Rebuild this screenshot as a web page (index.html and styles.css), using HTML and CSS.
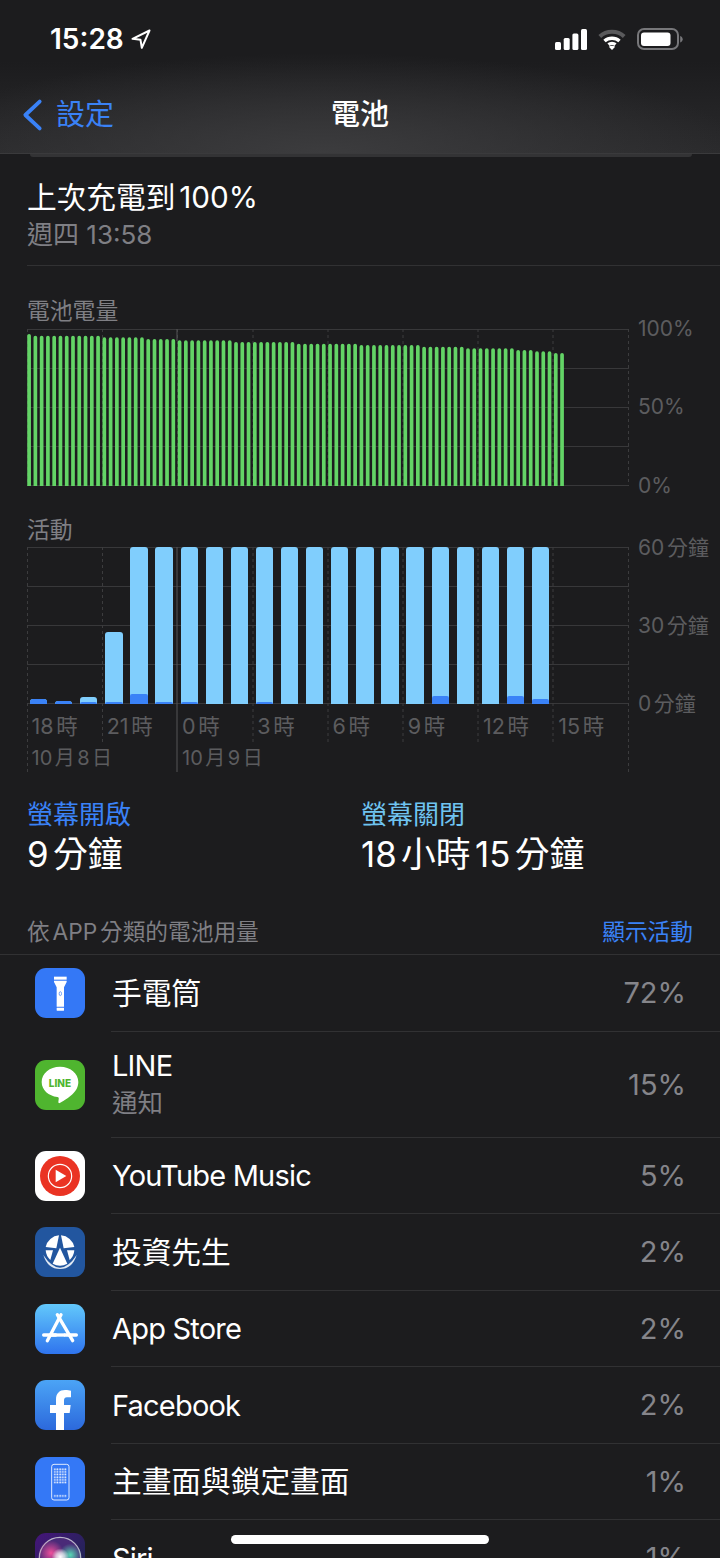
FILE: index.html
```html
<!DOCTYPE html>
<html lang="zh-Hant">
<head>
<meta charset="utf-8">
<title>電池</title>
<link rel="stylesheet" href="styles.css">
</head>
<body>
<div class="screen">
  <header class="top">
    <div class="status">
      <div class="clock"><span>15:28</span>
        <svg class="loc" viewBox="0 0 20 20"><path d="M18.5 1.5 1.500 9.800 9.500 10.800 10.800 18.800Z"/></svg>
      </div>
      <div class="sys">
        <svg class="signal" viewBox="0 0 32 21"><rect x="0" y="13" width="6" height="8" rx="1.500"/><rect x="8.700" y="9" width="6" height="12" rx="1.500"/><rect x="17.400" y="4.500" width="6" height="16.500" rx="1.500"/><rect x="26" y="0" width="6" height="21" rx="1.500"/></svg>
        <svg class="wifi" viewBox="0 0 28 21"><path class="wifi-dim" d="M1.800 7.500C8.500 1.200 19.500 1.200 26.200 7.500"/><path class="wifi-on" d="M6.500 12C10.800 8.300 17.200 8.300 21.500 12"/><path class="wifi-on" d="M10.500 15.600C12.500 14 15.500 14 17.500 15.600"/><path class="wifi-tip" d="M14 21 10.800 17.700C12.700 16.400 15.300 16.400 17.200 17.700Z"/></svg>
        <svg class="batt" viewBox="0 0 46 22"><rect class="batt-shell" x="1" y="1" width="40" height="20" rx="6"/><rect class="batt-fill" x="4" y="4.500" width="29.500" height="13.500" rx="3"/><path class="batt-cap" d="M43.200 8v6.500c1.500-.5 2.500-1.700 2.500-3.200s-1-2.800-2.500-3.300Z"/></svg>
      </div>
    </div>
    <nav class="nav">
      <a class="back">
        <svg class="chev" viewBox="0 0 22 34"><path d="M18.500 3 3.500 17l15 14"/></svg>
        <span>設定</span>
      </a>
      <h1 class="title">電池</h1>
    </nav>
  </header>
  <div class="peek"></div>

  <section class="charged">
    <div class="charged-main">上次充電到100%</div>
    <div class="charged-sub">週四 13:58</div>
  </section>

  <section class="chart-block battery">
    <h2 class="chart-title">電池電量</h2>
    <div class="chart-row">
      <div class="plot">
        <svg class="grid" viewBox="0 0 602 157"><path class="h" d="M0 .5H602M0 39.500H602M0 78.500H602M0 117.500H602M0 156.500H602"/><path class="v" d="M.5 0V157M75.500 0V157M150.500 0V157M226 0V157M301 0V157M376 0V157M451 0V157M526 0V157M601.500 0V157"/><path class="day" d="M150 0V12"/></svg>
        <svg class="levels" viewBox="0 0 602 157"><path transform="translate(0 2)" d="M2.100 4.800V160M8.370 6.500V160m6.270-153.500V160m6.270-153.500V160m6.270-153.500V160m6.270-153.500V160m6.270-153.500V160m6.270-153.500V160m6.270-153.500V160m6.270-153.500V160m6.270-153.500V160m6.270-153.500V160M77.340 8.200V160m6.270-151.800V160m6.270-151.800V160m6.270-151.800V160m6.270-151.800V160m6.270-151.800V160m6.270-151.800V160M121.230 9.800V160m6.270-150.200V160m6.270-150.200V160m6.270-150.200V160m6.270-150.200V160M152.580 11.200V160m6.270-148.800V160m6.270-148.800V160m6.270-148.800V160m6.270-148.800V160m6.270-148.800V160m6.270-148.800V160m6.270-148.800V160m6.270-148.800V160M209.010 12.800V160m6.270-147.200V160m6.270-147.200V160m6.270-147.200V160m6.270-147.200V160m6.270-147.200V160m6.270-147.200V160m6.270-147.200V160m6.270-147.200V160m6.270-147.200V160M271.710 14.500V160m6.270-145.500V160m6.270-145.500V160m6.270-145.500V160m6.270-145.500V160m6.270-145.500V160m6.270-145.500V160m6.270-145.500V160m6.270-145.500V160m6.270-145.500V160M334.410 15.900V160m6.270-144.100V160m6.270-144.100V160m6.270-144.100V160m6.270-144.100V160m6.270-144.100V160m6.270-144.100V160m6.270-144.100V160m6.270-144.100V160m6.270-144.100V160M397.110 17.500V160m6.270-142.500V160m6.270-142.500V160m6.270-142.500V160m6.270-142.500V160m6.270-142.500V160m6.270-142.500V160M440.990 19V160m6.270-141V160m6.270-141V160m6.270-141V160m6.270-141V160m6.270-141V160m6.270-141V160m6.270-141V160M491.160 20.800V160m6.270-139.200V160m6.270-139.200V160M510 22.200V160m6.270-137.800V160m6.270-137.800V160M528.780 23.800V160m6.270-136.200V160"/></svg>
      </div>
      <div class="axis">
        <span>100%</span><span>50%</span><span>0%</span>
      </div>
    </div>
  </section>

  <section class="chart-block activity">
    <h2 class="chart-title">活動</h2>
    <div class="chart-row">
      <div class="plot">
        <svg class="grid tall" viewBox="0 0 602 225"><path class="h" d="M0 .5H602M0 39.500H602M0 78.500H602M0 117.500H602M0 156.500H602"/><path class="v" d="M75.500 0V196M226 0V196M301 0V196M376 0V196M451 0V196M526 0V196M.5 0V225M601.500 0V225"/><path class="day" d="M150 0V225"/></svg>
        <div class="bars">
          <div class="bar" style="height:5px"><i style="height:5px"></i></div>
          <div class="bar" style="height:3px"><i style="height:3px"></i></div>
          <div class="bar" style="height:7px"><i style="height:2px"></i></div>
          <div class="bar" style="height:72px"><i style="height:2px"></i></div>
          <div class="bar" style="height:157px"><i style="height:10px"></i></div>
          <div class="bar" style="height:157px"><i style="height:2px"></i></div>
          <div class="bar" style="height:157px"><i style="height:2px"></i></div>
          <div class="bar" style="height:157px"></div>
          <div class="bar" style="height:157px"></div>
          <div class="bar" style="height:157px"><i style="height:2px"></i></div>
          <div class="bar" style="height:157px"></div>
          <div class="bar" style="height:157px"></div>
          <div class="bar" style="height:157px"></div>
          <div class="bar" style="height:157px"></div>
          <div class="bar" style="height:157px"></div>
          <div class="bar" style="height:157px"></div>
          <div class="bar" style="height:157px"><i style="height:8px"></i></div>
          <div class="bar" style="height:157px"></div>
          <div class="bar" style="height:157px"></div>
          <div class="bar" style="height:157px"><i style="height:8px"></i></div>
          <div class="bar" style="height:157px"><i style="height:5px"></i></div>
        </div>
        <div class="hours">
          <span>18時</span><span>21時</span><span>0時</span><span>3時</span><span>6時</span><span>9時</span><span>12時</span><span>15時</span>
        </div>
        <div class="dates">
          <span class="d1">10月8日</span><span class="d2">10月9日</span>
        </div>
      </div>
      <div class="axis axis-time">
        <span>60分鐘</span><span>30分鐘</span><span>0分鐘</span>
      </div>
    </div>
  </section>

  <section class="summary">
    <div class="stat">
      <div class="stat-label on">螢幕開啟</div>
      <div class="stat-value">9分鐘</div>
    </div>
    <div class="stat">
      <div class="stat-label off">螢幕關閉</div>
      <div class="stat-value">18小時15分鐘</div>
    </div>
  </section>

  <div class="list-head">
    <span>依APP分類的電池用量</span>
    <a class="link">顯示活動</a>
  </div>

  <ul class="apps">
    <li class="app">
      <svg class="icon" viewBox="0 0 150 150"><rect width="150" height="150" rx="33" fill="#3478f6"/><g fill="#fff"><rect x="57" y="26" width="38" height="9"/><path d="M57 38H95V42L87 58V116H65V58L57 42Z"/><rect x="65" y="119" width="22" height="9" rx="1"/></g><ellipse cx="76" cy="77" rx="3.500" ry="6" fill="none" stroke="#3478f6" stroke-width="2"/></svg>
      <div class="app-body"><div class="app-name">手電筒</div><div class="pct">72%</div></div>
    </li>
    <li class="app tall-row">
      <svg class="icon" viewBox="0 0 150 150"><rect width="150" height="150" rx="33" fill="#4fb52f"/><path fill="#fff" d="M75 20C44 20 20 40 20 66C20 90 41 108 67 111C71 112 72 114 71 118L70 127C70 129 72 130 74 129C90 120 130 100 130 66C130 40 106 20 75 20Z"/><text x="75" y="80" class="line-word">LINE</text></svg>
      <div class="app-body"><div><div class="app-name latin">LINE</div><div class="app-note">通知</div></div><div class="pct">15%</div></div>
    </li>
    <li class="app">
      <svg class="icon" viewBox="0 0 150 150"><rect width="150" height="150" rx="33" fill="#fff"/><circle cx="75" cy="75" r="60" fill="#ea3323"/><circle cx="75" cy="75" r="35" fill="none" stroke="#fff" stroke-width="3.500"/><path fill="#fff" d="M62 56 94 75 62 94Z"/></svg>
      <div class="app-body"><div class="app-name latin">YouTube Music</div><div class="pct">5%</div></div>
    </li>
    <li class="app">
      <svg class="icon" viewBox="0 0 150 150"><rect width="150" height="150" rx="33" fill="#22569f"/><g fill="#fff"><path d="M72 25A44 44 0 0 0 32 60L64 64Z"/><path d="M78 25A44 44 0 0 1 118 60L86 64Z"/><path d="M32 70H54L46 99A44 44 0 0 1 32 70Z"/><path d="M118 70H96L104 99A44 44 0 0 0 118 70Z"/><path d="M75 62 97 110A44 44 0 0 1 53 110Z"/></g><path fill="#dfe8f3" d="M25 84Q75 160 125 84Q112 126 75 126Q38 126 25 84Z"/></svg>
      <div class="app-body"><div class="app-name">投資先生</div><div class="pct">2%</div></div>
    </li>
    <li class="app">
      <svg class="icon" viewBox="0 0 150 150"><defs><linearGradient id="store" x1="0" y1="0" x2="0" y2="1"><stop offset="0" stop-color="#62c8fb"/><stop offset="1" stop-color="#2f74ee"/></linearGradient></defs><rect width="150" height="150" rx="33" fill="url(#store)"/><g fill="none" stroke="#fff" stroke-width="10" stroke-linecap="round"><path d="M78 32 37 110"/><path d="M67 32 113 110"/><path d="M26 93H62"/><path d="M90 93H124"/></g><path d="M48 93H90" stroke="#fff" stroke-width="10"/></svg>
      <div class="app-body"><div class="app-name latin">App Store</div><div class="pct">2%</div></div>
    </li>
    <li class="app">
      <svg class="icon" viewBox="0 0 150 150"><defs><linearGradient id="fb" x1="0" y1="0" x2="0" y2="1"><stop offset="0" stop-color="#4ba4f6"/><stop offset="1" stop-color="#2c69dc"/></linearGradient></defs><rect width="150" height="150" rx="33" fill="url(#fb)"/><path fill="#fff" d="M63 150V99H45V75H63V58C63 40 74 30 90 30C98 30 104 31 108 32V52H96C89 52 87 56 87 62V75H107L104 99H87V150Z"/></svg>
      <div class="app-body"><div class="app-name latin">Facebook</div><div class="pct">2%</div></div>
    </li>
    <li class="app">
      <svg class="icon" viewBox="0 0 150 150"><defs><pattern id="dots" x="56" y="33" width="8" height="8" patternUnits="userSpaceOnUse"><rect x="1" y="1" width="5" height="5" rx="1" fill="#fff"/></pattern></defs><rect width="150" height="150" rx="33" fill="#3478f6"/><rect x="50" y="22" width="52" height="107" rx="7" fill="none" stroke="#fff" stroke-width="2.500"/><rect x="56" y="33" width="40" height="48" fill="url(#dots)"/><rect x="56" y="113" width="40" height="8" fill="url(#dots)"/></svg>
      <div class="app-body"><div class="app-name">主畫面與鎖定畫面</div><div class="pct">1%</div></div>
    </li>
    <li class="app">
      <svg class="icon" viewBox="0 0 150 150"><defs>
        <linearGradient id="siribg" x1="0" y1="0" x2="1" y2="1"><stop offset="0" stop-color="#46157a"/><stop offset="1" stop-color="#15294a"/></linearGradient>
        <radialGradient id="siripink"><stop offset="0" stop-color="#ef4f9c"/><stop offset="1" stop-color="#ef4f9c" stop-opacity="0"/></radialGradient>
        <radialGradient id="sirigreen"><stop offset="0" stop-color="#56d8b4"/><stop offset="1" stop-color="#56d8b4" stop-opacity="0"/></radialGradient>
        <radialGradient id="sirilight"><stop offset="0" stop-color="#fff"/><stop offset=".5" stop-color="#fff" stop-opacity=".65"/><stop offset="1" stop-color="#fff" stop-opacity="0"/></radialGradient>
      </defs><rect width="150" height="150" rx="33" fill="url(#siribg)"/><circle cx="75" cy="75" r="62" fill="#4a2a78" stroke="#b9b3c9" stroke-width="4"/><circle cx="48" cy="60" r="38" fill="url(#siripink)"/><circle cx="106" cy="66" r="34" fill="url(#sirigreen)"/><circle cx="76" cy="72" r="26" fill="url(#sirilight)"/></svg>
      <div class="app-body"><div class="app-name latin">Siri</div><div class="pct">1%</div></div>
    </li>
  </ul>
  <div class="home-bar"></div>
</div>
</body>
</html>
```
FILE: styles.css
```css
* { box-sizing: border-box; }
html, body { margin: 0; padding: 0; height: 1558px; overflow: hidden; background: #1c1c1e; }
body {
  font-family: Inter, "Noto Sans CJK TC", sans-serif;
  color: #fff;
  text-autospace: normal;
}
.screen { position: relative; width: 720px; height: 1558px; overflow: hidden; }

.top {
  height: 154px;
  background:
    radial-gradient(ellipse 420px 100px at 45% 100%, #3c3c3e 0%, rgba(60,60,62,.45) 55%, rgba(60,60,62,0) 100%),
    linear-gradient(#1c1c1e 40%, #2a2a2c 100%);
  border-bottom: 1px solid #3a3a3c;
}
.status { height: 78px; display: flex; justify-content: space-between; align-items: center; padding: 0 37px 0 50px; }
.clock { display: flex; align-items: center; gap: 7px; font-size: 28px; font-weight: 600; }
.loc { width: 20px; height: 20px; fill: none; stroke: #fff; stroke-width: 2; stroke-linejoin: round; }
.sys { display: flex; align-items: center; }
.signal { width: 32px; height: 21px; fill: #fff; margin-right: 11px; }
.wifi { width: 28px; height: 21px; fill: none; margin-right: 11px; }
.wifi-dim { stroke: #5a5a5c; stroke-width: 4; }
.wifi-on { stroke: #fff; stroke-width: 3.500; }
.wifi-tip { fill: #fff; }
.batt { width: 46px; height: 22px; }
.batt-shell { fill: none; stroke: #77777a; stroke-width: 2; }
.batt-fill { fill: #fff; }
.batt-cap { fill: #77777a; }

.nav { position: relative; height: 75px; display: flex; justify-content: center; align-items: center; padding-bottom: 1px; }
.back { position: absolute; left: 22px; top: 20px; display: flex; align-items: center; gap: 13px; color: #3a82f7; font-size: 29px; line-height: 34px; }
.chev { width: 21px; height: 34px; fill: none; stroke: #3a82f7; stroke-width: 4; stroke-linecap: round; stroke-linejoin: round; }
.title { margin: 0; font-size: 29px; font-weight: 500; line-height: 40px; }

.peek { height: 3px; margin: 0 28px 0 30px; background: #333335; border-radius: 0 0 8px 8px; }

.charged { height: 109px; margin-left: 27px; border-bottom: 1px solid #313133; padding-top: 20px; }
.charged-main { font-size: 29.700px; line-height: 40px; }
.charged-sub { font-size: 26px; line-height: 36px; color: #7f7f84; }

.chart-title { margin: 0 0 2.500px; font-size: 22.800px; font-weight: 400; line-height: 30px; color: #7f7f84; }
.chart-block { padding-left: 27px; }
.battery { padding-top: 30px; }
.activity { padding-top: 29px; }
.chart-row { display: flex; gap: 9px; height: 157px; }
.plot { position: relative; width: 602px; height: 157px; }
.grid { position: absolute; left: 0; top: 0; width: 602px; height: 157px; }
.grid.tall { height: 225px; }
.grid .h { stroke: #38383a; stroke-width: 1; fill: none; }
.grid .v { stroke: #3c3c3e; stroke-width: 1; stroke-dasharray: 3 3; fill: none; }
.grid .day { stroke: #555557; stroke-width: 1; fill: none; }
.levels { position: absolute; left: 0; top: 0; width: 602px; height: 157px; fill: none; stroke: #63d466; stroke-width: 3.700; stroke-linecap: round; }

.axis { display: flex; flex-direction: column; gap: 54.500px; height: 181px; margin-top: -12px; font-size: 21px; line-height: 24px; color: #5c5c5f; white-space: nowrap; }
.axis-time { margin-top: -11px; gap: 54.200px; }

.bars { position: relative; display: flex; align-items: flex-end; gap: 7.800px; height: 157px; padding-left: 3px; }
.bar { position: relative; flex: 0 0 17.300px; background: #80cefd; border-radius: 3px 3px 0 0; overflow: hidden; }
.bar i { position: absolute; left: 0; right: 0; bottom: 0; display: block; background: #3a82f7; border-radius: 2px 2px 0 0; }

.hours { position: relative; display: grid; grid-template-columns: repeat(8, 75.250px); margin-top: 9px; font-size: 21.500px; line-height: 26px; color: #5c5c5f; }
.hours span { padding-left: 4.500px; }
.dates { position: relative; display: grid; grid-template-columns: repeat(8, 75.250px); margin-top: 6px; font-size: 20px; line-height: 26px; color: #5c5c5f; }
.dates span { padding-left: 4.500px; white-space: nowrap; }
.d1 { grid-column: 1 / 3; }
.d2 { grid-column: 3 / 5; }

.summary { display: grid; grid-template-columns: 334px 1fr; margin-top: 95px; padding-left: 27px; }
.stat-label { font-size: 26px; line-height: 30px; padding-top: 1px; }
.stat-value { margin-top: 4px; font-size: 34.800px; line-height: 40px; }
.stat-label.on { color: #3a82f7; }
.stat-label.off { color: #6fc3f0; }

.list-head { display: flex; justify-content: space-between; margin-top: 43px; padding: 0 27px 7px; height: 38px; border-bottom: 1px solid #313133; font-size: 22.700px; line-height: 30px; color: #7f7f84; }
.link { color: #3a82f7; }

.apps { list-style: none; margin: 0; padding: 0; }
.app { display: flex; align-items: center; height: 76.500px; padding-left: 35px; }
.tall-row { height: 106px; }
.icon { flex: 0 0 50px; width: 50px; height: 50px; }
.app-body { flex: 1; height: 100%; display: flex; justify-content: space-between; align-items: center; margin-left: 26px; padding: 0 34px 0 1px; border-bottom: 1px solid #313133; }
.app-name { font-size: 29.700px; line-height: 36px; }
.app-name.latin { font-size: 29px; letter-spacing: -.8px; padding-top: 2px; }
.app-note { font-size: 25.500px; line-height: 32px; color: #7f7f84; }
.tall-row .app-name.latin { padding-top: 0; margin-top: -2px; }
.tall-row .app-note { margin-top: 3px; }
.pct { font-size: 29px; color: #85858a; }
.line-word { font-family: Inter, sans-serif; font-size: 30px; font-weight: 800; fill: #4fb52f; text-anchor: middle; }

.home-bar { position: absolute; left: 231px; top: 1535px; width: 258px; height: 9px; border-radius: 5px; background: #fff; }
```
